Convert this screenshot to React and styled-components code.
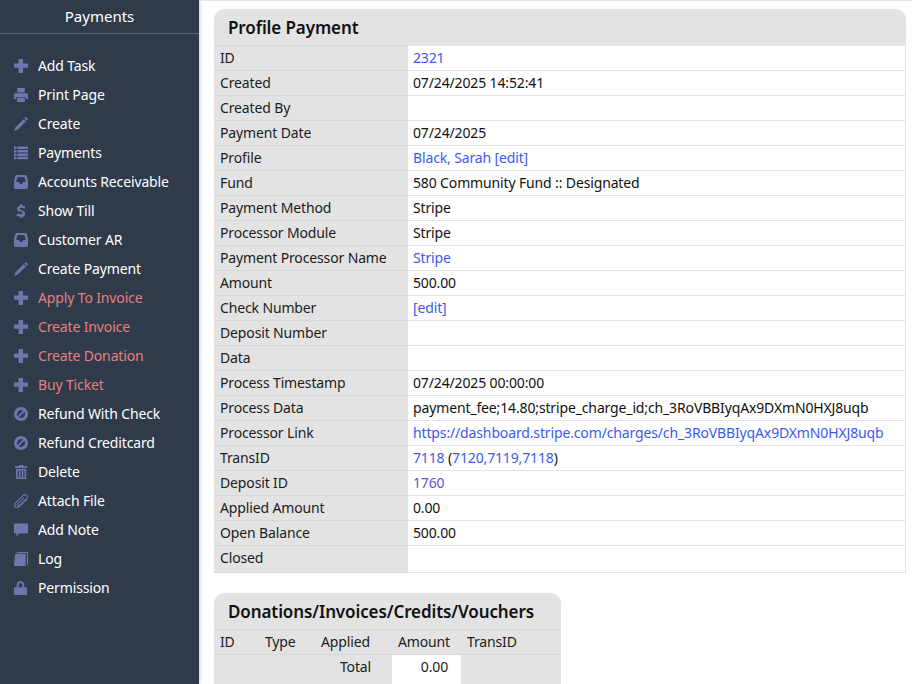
import React from "react";
import styled, { createGlobalStyle } from "styled-components";

const GlobalStyle = createGlobalStyle`
  html, body {
    margin: 0;
    height: 100%;
    overflow: hidden;
    background: #fff;
  }
  body, button, td, th {
    font-family: "Noto Sans", "Open Sans", sans-serif;
    font-size: 14px;
    letter-spacing: -0.14px;
    color: #1c1c1c;
  }
`;

const Page = styled.div`
  display: flex;
  height: 100vh;
  overflow: hidden;
`;

const Sidebar = styled.nav`
  flex: 0 0 199px;
  background: #2f3b4b;
  box-shadow: 1px 0 3px rgba(0, 0, 0, 0.2);
  color: #fff;
`;

const SideTitle = styled.div`
  height: 33px;
  line-height: 32px;
  text-align: center;
  font-size: 15px;
  letter-spacing: 0;
  border-bottom: 1px solid #56647c;
`;

const Menu = styled.div`
  padding-top: 17px;
`;

const MenuItem = styled.div`
  display: flex;
  align-items: center;
  height: 29px;
  padding-left: 14px;
  color: ${(p) => (p.$warn ? "#e57f7f" : "#fff")};
`;

const Icon = styled.svg`
  width: 14px;
  height: 14px;
  margin-right: 10px;
  fill: #6f75ad;
  color: #6f75ad;
  flex: none;
`;

const Main = styled.main`
  flex: 1;
  min-width: 0;
  padding: 9px 6px 0 15px;
  box-shadow: inset 0 1px 0 #e4e4e4;
`;

const Panel = styled.section`
  background: #e3e3e3;
  border-radius: 10px 10px 0 0;
`;

const SmallPanel = styled(Panel)`
  width: 347px;
  margin-top: 20px;
`;

const PanelTitle = styled.h2`
  margin: 0;
  height: 36px;
  line-height: 38px;
  padding-left: 14px;
  font-size: 17px;
  font-weight: 600;
  letter-spacing: -0.1px;
  color: #111;
`;

const DetailTable = styled.table`
  width: 100%;
  border-collapse: collapse;
  table-layout: fixed;

  tr:last-child td {
    height: 26px;
  }
`;

const Label = styled.td`
  width: 194px;
  height: 24px;
  padding: 0 0 0 6px;
  box-sizing: border-box;
  line-height: 24px;
  vertical-align: top;
  background: #e3e3e3;
  border-top: 1px solid #d8d8d8;
  border-bottom: 1px solid #d8d8d8;
`;

const Value = styled.td`
  height: 24px;
  padding: 0 0 0 5px;
  line-height: 24px;
  vertical-align: top;
  background: #fff;
  border: 1px solid #e3e3e3;
  border-left: 0;
  color: #111;
`;

const Link = styled.a`
  color: ${(p) => (p.$visited ? "#6a4fd8" : "#3b5bef")};
`;

const ListHead = styled.div`
  display: grid;
  grid-template-columns: 45px 56px 77px 69px 1fr;
  height: 24px;
  line-height: 24px;
  padding-left: 6px;
  border-top: 1px solid #d8d8d8;
`;

const TotalRow = styled.div`
  display: grid;
  grid-template-columns: 178px 69px 1fr;
  height: 30px;
  border-top: 1px solid #d8d8d8;
`;

const TotalLabel = styled.div`
  line-height: 24px;
  text-align: right;
  padding-right: 21px;
`;

const TotalValue = styled.div`
  line-height: 24px;
  text-align: right;
  padding-right: 13px;
  background: #fff;
`;

const ICONS = {
  plus: <path d="M4.6 0h4.4v4.6h5v4.2H9V14H4.6V8.8H0V4.6h4.6z" />,
  print: (
    <path d="M3.2 0h7.6v4.4H3.2zM1.6 5.2h10.8c.9 0 1.6.6 1.6 1.5v4.3h-2.4V9H2.4v2H0V6.7c0-.9.7-1.5 1.6-1.5zM3.2 9.8h7.6V14H3.2z" />
  ),
  pencil: (
    <path d="M11.8 0L14 2.2l-1.4 1.6-2.3-2.3zM9.6 2.2l2.3 2.3-7.8 7.7L0 14l1.7-4z" />
  ),
  list: (
    <path d="M0 .6h2.5v2.5H0zM3.4.6H14v2.5H3.4zM0 4h2.5v2.5H0zM3.4 4H14v2.5H3.4zM0 7.4h2.5v2.5H0zM3.4 7.4H14v2.5H3.4zM0 10.8h2.5v2.5H0zM3.4 10.8H14v2.5H3.4z" />
  ),
  inbox: (
    <path
      fillRule="evenodd"
      d="M2.6 0h8.8c.6 0 1.1.3 1.3.9L14 6v6.6c0 .8-.6 1.4-1.4 1.4H1.4C.6 14 0 13.4 0 12.6V6L1.3.9C1.5.3 2 0 2.6 0zM3.5 2L2.2 7h2.7l1 2h2.2l1-2h2.7l-1.3-5z"
    />
  ),
  dollar: (
    <path d="M6.1 0h1.8v1.6c1.4.1 2.6.5 3.4 1l-.7 2.1c-.8-.5-2-1-3.2-1-1.1 0-1.7.4-1.7 1.1 0 .7.8 1.1 2.1 1.5 2.1.8 3.3 1.7 3.3 3.5 0 1.7-1.2 3-3.2 3.3V14H6.1v-1.4c-1.5-.1-2.8-.6-3.6-1.1l.7-2.2c.9.6 2.2 1.1 3.5 1.1 1.1 0 1.9-.5 1.9-1.2 0-.8-.7-1.2-2.1-1.7C4.6 7.7 3.1 6.8 3.1 4.9c0-1.7 1.2-2.9 3-3.2z" />
  ),
  ban: (
    <path
      fillRule="evenodd"
      d="M7 0a7 7 0 1 1 0 14A7 7 0 0 1 7 0zM3.5 9.3l5.8-5.8a4.3 4.3 0 0 0-5.8 5.8zm1.2 1.2a4.3 4.3 0 0 0 5.8-5.8z"
    />
  ),
  trash: (
    <path
      fillRule="evenodd"
      d="M5 0h4.2l.5 1.3h3.5v1.8H1V1.3h3.5zM2 3.9h10.2V14H2zM3.7 5.2v7.6h1.2V5.2zm2.8 0v7.6h1.2V5.2zm2.8 0v7.6h1.2V5.2z"
    />
  ),
  clip: (
    <path
      fill="none"
      stroke="currentColor"
      strokeWidth="1.1"
      d="M13 5L5.6 12.4c-1.4 1.3-3.2 1.5-4.2.5s-.9-2.8.5-4.2L8.9 1.6c1.2-1.1 2.7-1.1 3.6-.2s1 2.3-.2 3.6L5.8 11.4c-.7.7-1.5.7-2 .2s-.5-1.3.2-2l5.8-5.7"
    />
  ),
  comment: (
    <path d="M1.2.6h11.6c.7 0 1.2.5 1.2 1.2v7.4c0 .7-.5 1.2-1.2 1.2H5.2L2.2 13.6l.3-3.2H1.2C.5 10.4 0 9.9 0 9.2V1.8C0 1.1.5.6 1.2.6z" />
  ),
  book: (
    <path
      fillRule="evenodd"
      d="M2.6 0H14v13h-1V1H2.8zM2 1.8h9.6V14H1c-.6 0-1-.4-1-1L1 2.7c.1-.6.5-.9 1-.9z"
    />
  ),
  lock: (
    <path
      fillRule="evenodd"
      d="M6.5 0c2.2 0 3.8 1.6 3.8 3.9v2.3h1.7c.6 0 1 .4 1 1V13c0 .6-.4 1-1 1H1c-.6 0-1-.4-1-1V7.2c0-.6.4-1 1-1h1.7V3.9C2.7 1.6 4.3 0 6.5 0zM4.7 6.2h3.6V3.9c0-1.2-.7-1.9-1.8-1.9s-1.8.7-1.8 1.9z"
    />
  ),
};

const menu = [
  ["plus", "Add Task"],
  ["print", "Print Page"],
  ["pencil", "Create"],
  ["list", "Payments"],
  ["inbox", "Accounts Receivable"],
  ["dollar", "Show Till"],
  ["inbox", "Customer AR"],
  ["pencil", "Create Payment"],
  ["plus", "Apply To Invoice", true],
  ["plus", "Create Invoice", true],
  ["plus", "Create Donation", true],
  ["plus", "Buy Ticket", true],
  ["ban", "Refund With Check"],
  ["ban", "Refund Creditcard"],
  ["trash", "Delete"],
  ["clip", "Attach File"],
  ["comment", "Add Note"],
  ["book", "Log"],
  ["lock", "Permission"],
];

const rows = [
  ["ID", <Link>2321</Link>],
  ["Created", "07/24/2025 14:52:41"],
  ["Created By", ""],
  ["Payment Date", "07/24/2025"],
  ["Profile", <Link>Black, Sarah [edit]</Link>],
  ["Fund", "580 Community Fund :: Designated"],
  ["Payment Method", "Stripe"],
  ["Processor Module", "Stripe"],
  ["Payment Processor Name", <Link>Stripe</Link>],
  ["Amount", "500.00"],
  ["Check Number", <Link>[edit]</Link>],
  ["Deposit Number", ""],
  ["Data", ""],
  ["Process Timestamp", "07/24/2025 00:00:00"],
  ["Process Data", "payment_fee;14.80;stripe_charge_id;ch_3RoVBBIyqAx9DXmN0HXJ8uqb"],
  ["Processor Link", <Link>https://dashboard.stripe.com/charges/ch_3RoVBBIyqAx9DXmN0HXJ8uqb</Link>],
  [
    "TransID",
    <span>
      <Link>7118</Link> (<Link>7120,7119,7118</Link>)
    </span>,
  ],
  ["Deposit ID", <Link $visited>1760</Link>],
  ["Applied Amount", "0.00"],
  ["Open Balance", "500.00"],
  ["Closed", ""],
];

function App() {
  return (
    <Page>
      <GlobalStyle />
      <Sidebar>
        <SideTitle>Payments</SideTitle>
        <Menu>
          {menu.map(([icon, label, warn]) => (
            <MenuItem key={label} $warn={warn}>
              <Icon viewBox="0 0 14 14">{ICONS[icon]}</Icon>
              {label}
            </MenuItem>
          ))}
        </Menu>
      </Sidebar>
      <Main>
        <Panel>
          <PanelTitle>Profile Payment</PanelTitle>
          <DetailTable>
            <tbody>
              {rows.map(([label, value]) => (
                <tr key={label}>
                  <Label>{label}</Label>
                  <Value>{value}</Value>
                </tr>
              ))}
            </tbody>
          </DetailTable>
        </Panel>
        <SmallPanel>
          <PanelTitle>Donations/Invoices/Credits/Vouchers</PanelTitle>
          <ListHead>
            <span>ID</span>
            <span>Type</span>
            <span>Applied</span>
            <span>Amount</span>
            <span>TransID</span>
          </ListHead>
          <TotalRow>
            <TotalLabel>Total</TotalLabel>
            <TotalValue>0.00</TotalValue>
          </TotalRow>
        </SmallPanel>
      </Main>
    </Page>
  );
}

export default App;
